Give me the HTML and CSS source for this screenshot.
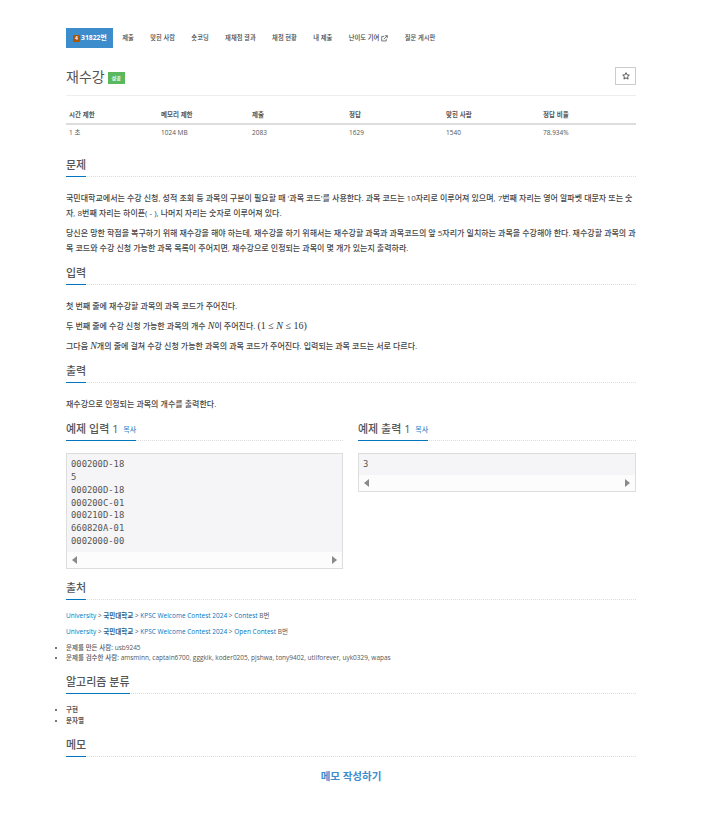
FILE: index.html
```html
<!DOCTYPE html>
<html lang="ko">
<head>
    <meta charset="UTF-8">
    <title>31822번: 재수강</title>
    <link rel="stylesheet" href="styles.css">
</head>
<body>
<div class="container">
    <!-- 문제 메뉴 -->
    <ul class="problem-menu">
        <li class="active"><a href="#"><span class="tier">4</span>31822번</a></li>
        <li><a href="#">제출</a></li>
        <li><a href="#">맞힌 사람</a></li>
        <li><a href="#">숏코딩</a></li>
        <li><a href="#">재채점 결과</a></li>
        <li><a href="#">채점 현황</a></li>
        <li><a href="#">내 제출</a></li>
        <li><a href="#">난이도 기여
            <svg class="ext" viewBox="0 0 10 10" width="7" height="7"><path d="M7.5 5.5v3h-6.5v-6.5h3.5M5.5 1h3.5v3.500M9 1l-5 5" fill="none" stroke="#444" stroke-width="1"/></svg>
        </a></li>
        <li><a href="#">질문 게시판</a></li>
    </ul>

    <div class="page-header">
        <h1>재수강 <span class="label-success">성공</span></h1>
        <button class="star-btn">
            <svg viewBox="0 0 12 12" width="8" height="8"><path d="M6 1l1.500 3.300 3.500.4-2.600 2.400.7 3.500L6 8.800 2.900 10.600l.7-3.500L1 4.700l3.500-.4z" fill="none" stroke="#333" stroke-width="1.200"/></svg>
        </button>
    </div>

    <table class="info">
        <thead>
            <tr><th>시간 제한</th><th>메모리 제한</th><th>제출</th><th>정답</th><th>맞힌 사람</th><th>정답 비율</th></tr>
        </thead>
        <tbody>
            <tr><td>1 초</td><td>1024 MB</td><td>2083</td><td>1629</td><td>1540</td><td>78.934%</td></tr>
        </tbody>
    </table>

    <section class="first">
        <div class="headline"><h2>문제</h2></div>
        <div class="text">
            <p>국민대학교에서는 수강 신청, 성적 조회 등 과목의 구분이 필요할 때 '과목 코드'를 사용한다. 과목 코드는 10자리로 이루어져 있으며, 7번째 자리는 영어 알파벳 대문자 또는 숫자, 8번째 자리는 하이픈( - ), 나머지 자리는 숫자로 이루어져 있다.</p>
            <p>당신은 망한 학점을 복구하기 위해 재수강을 해야 하는데, 재수강을 하기 위해서는 재수강할 과목과 과목코드의 앞 5자리가 일치하는 과목을 수강해야 한다. 재수강할 과목의 과목 코드와 수강 신청 가능한 과목 목록이 주어지면, 재수강으로 인정되는 과목이 몇 개가 있는지 출력하라.</p>
        </div>
    </section>

    <section>
        <div class="headline"><h2>입력</h2></div>
        <div class="text">
            <p>첫 번째 줄에 재수강할 과목의 과목 코드가 주어진다.</p>
            <p>두 번째 줄에 수강 신청 가능한 과목의 개수 <span class="math"><i>N</i></span>이 주어진다. <span class="math">(1 ≤ <i>N</i> ≤ 16)</span></p>
            <p>그다음 <span class="math"><i>N</i></span>개의 줄에 걸쳐 수강 신청 가능한 과목의 과목 코드가 주어진다. 입력되는 과목 코드는 서로 다르다.</p>
        </div>
    </section>

    <section>
        <div class="headline"><h2>출력</h2></div>
        <div class="text">
            <p>재수강으로 인정되는 과목의 개수를 출력한다.</p>
        </div>
    </section>

    <div class="samples">
        <div class="sample">
            <div class="headline"><h2>예제 입력 1 <a class="copy" href="#">복사</a></h2></div>
            <div class="sample-box">
                <pre>000200D-18
5
000200D-18
000200C-01
000210D-18
660820A-01
0002000-00</pre>
                <div class="scrollbar"><span class="arrow-left"></span><span class="arrow-right"></span></div>
            </div>
        </div>
        <div class="sample">
            <div class="headline"><h2>예제 출력 1 <a class="copy" href="#">복사</a></h2></div>
            <div class="sample-box">
                <pre>3</pre>
                <div class="scrollbar"><span class="arrow-left"></span><span class="arrow-right"></span></div>
            </div>
        </div>
    </div>

    <section class="source">
        <div class="headline"><h2>출처</h2></div>
        <p><a href="#">University</a> &gt; <a href="#"><b>국민대학교</b></a> &gt; <a href="#">KPSC Welcome Contest 2024</a> &gt; <a href="#">Contest</a> B번</p>
        <p><a href="#">University</a> &gt; <a href="#"><b>국민대학교</b></a> &gt; <a href="#">KPSC Welcome Contest 2024</a> &gt; <a href="#">Open Contest</a> B번</p>
        <ul class="credits">
            <li><b>문제를 만든 사람:</b> usb9245</li>
            <li><b>문제를 검수한 사람:</b> amsminn, captain6700, gggkik, koder0205, pjshwa, tony9402, utilforever, uyk0329, wapas</li>
        </ul>
    </section>

    <section class="tags">
        <div class="headline"><h2>알고리즘 분류</h2></div>
        <ul>
            <li>구현</li>
            <li>문자열</li>
        </ul>
    </section>

    <section class="memo">
        <div class="headline"><h2>메모</h2></div>
        <a class="memo-link" href="#">메모 작성하기</a>
    </section>
</div>
</body>
</html>
```

FILE: styles.css
```css
* {
    box-sizing: border-box;
}

body {
    font-family: "Open Sans", "Noto Sans CJK KR", sans-serif;
    font-size: 7px;
    line-height: 1.4;
    color: #555;
    background-color: #fff;
    margin: 0;
}

a {
    color: #0076c0;
    text-decoration: none;
}

.container {
    width: 570px;
    margin-left: 66px;
    padding-top: 28px;
}

.problem-menu {
    display: flex;
    list-style: none;
    margin: 0;
    padding: 0;
    height: 20px;
}

.problem-menu li a {
    display: flex;
    align-items: center;
    gap: 2px;
    height: 20px;
    padding: 0 8.2px;
    color: #444;
    font-size: 6.3px;
    font-weight: 500;
    white-space: nowrap;
}

.problem-menu li.active {
    margin-right: 1px;
}

.problem-menu li.active a {
    gap: 1px;
    padding: 0 7px;
    width: 47px;
    background-color: #3d8ccb;
    color: #fff;
    font-size: 6.8px;
    font-weight: 700;
}

.tier {
    display: inline-block;
    flex-shrink: 0;
    width: 7px;
    height: 7px;
    background-color: #ad5600;
    color: #fff;
    font-size: 5px;
    line-height: 7px;
    text-align: center;
    border-radius: 1px;
}

.page-header {
    display: flex;
    justify-content: space-between;
    align-items: center;
    height: 48px;
    padding-top: 10px;
    border-bottom: 1px solid #eee;
}

h1 {
    margin: 0;
    font-size: 14px;
    font-weight: 400;
    color: #555;
    display: flex;
    align-items: center;
    gap: 3px;
}

.label-success {
    background-color: #5cb85c;
    color: #fff;
    font-size: 5px;
    font-weight: 700;
    width: 17px;
    height: 12px;
    line-height: 12px;
    text-align: center;
    margin-top: 3px;
}

.star-btn {
    width: 21px;
    height: 18px;
    padding: 0;
    background-color: #fff;
    border: 1px solid #ccc;
    display: flex;
    align-items: center;
    justify-content: center;
    margin-top: -2px;
}

.info {
    width: 100%;
    border-collapse: collapse;
    table-layout: fixed;
    margin-top: 10px;
    font-size: 6.5px;
}

.info th {
    text-align: left;
    font-weight: 700;
    color: #555;
    padding: 4px 3px 3px;
    height: 18px;
    border-bottom: 2px solid #ddd;
}

.info th:nth-child(1) { width: 92px; }
.info th:nth-child(2) { width: 91px; }
.info th:nth-child(3) { width: 97px; }
.info th:nth-child(4) { width: 97px; }
.info th:nth-child(5) { width: 97px; }
.info th:nth-child(6) { width: 96px; }

.info td {
    padding: 3px;
    height: 17px;
}

section.first {
    margin-top: 13px;
}

.headline {
    display: flex;
    border-bottom: 1px dotted #ddd;
    height: 23px;
    margin-bottom: 13px;
}

.headline h2 {
    margin: 0 0 -1px;
    height: 23px;
    padding-top: 2px;
    font-size: 11px;
    font-weight: 500;
    line-height: 17px;
    color: #555;
    border-bottom: 1px solid #0076c0;
}

.text {
    margin-bottom: 7px;
}

.text p {
    margin: 0 0 5px;
    font-size: 8px;
    line-height: 15px;
    font-weight: 500;
    color: #444;
}

.math {
    font-family: "Liberation Serif", serif;
    font-size: 10px;
    color: #333;
}

.samples {
    display: grid;
    grid-template-columns: 277px 278px;
    gap: 15px;
    align-items: start;
}

.samples .headline {
    margin-bottom: 12px;
}

.copy {
    font-size: 7px;
    margin-left: 2px;
    vertical-align: 1px;
    color: #3d8ccb;
}

.sample-box {
    border: 1px solid #ddd;
}

.sample-box pre {
    margin: 0;
    padding: 4px;
    background-color: #f5f5f8;
    font-family: "DejaVu Sans Mono", monospace;
    font-size: 8.85px;
    line-height: 12.85px;
    color: #555;
}

.scrollbar {
    display: flex;
    justify-content: space-between;
    align-items: center;
    height: 16px;
    padding: 0 5px;
    background-color: #fcfcfc;
}

.arrow-left {
    border-style: solid;
    border-width: 4.5px 5px 4.5px 0;
    border-color: transparent #8a8a8a transparent transparent;
}

.arrow-right {
    border-style: solid;
    border-width: 4.5px 0 4.5px 5px;
    border-color: transparent transparent transparent #8a8a8a;
}

.source {
    margin-top: 8px;
}

.source .headline {
    margin-bottom: 11px;
}

.source p {
    margin: 0 0 6px;
    font-size: 6.5px;
    line-height: 10px;
}

.source a b {
    color: #2c5f8a;
}

.credits,
.tags ul {
    margin: 0;
    padding: 0;
    list-style: square;
    font-size: 6.5px;
}

.credits {
    line-height: 10px;
}

.credits b {
    font-weight: 500;
}

li::marker {
    color: #777;
}

.tags {
    margin-top: 8px;
}

.tags .headline {
    margin-bottom: 10px;
}

.tags ul {
    line-height: 11px;
    font-weight: 700;
}

.memo {
    margin-top: 8px;
}

.memo .headline {
    margin-bottom: 12px;
}

.memo-link {
    display: block;
    text-align: center;
    font-size: 10.5px;
    font-weight: 700;
    color: #3d8ccb;
    padding-bottom: 40px;
}
```
